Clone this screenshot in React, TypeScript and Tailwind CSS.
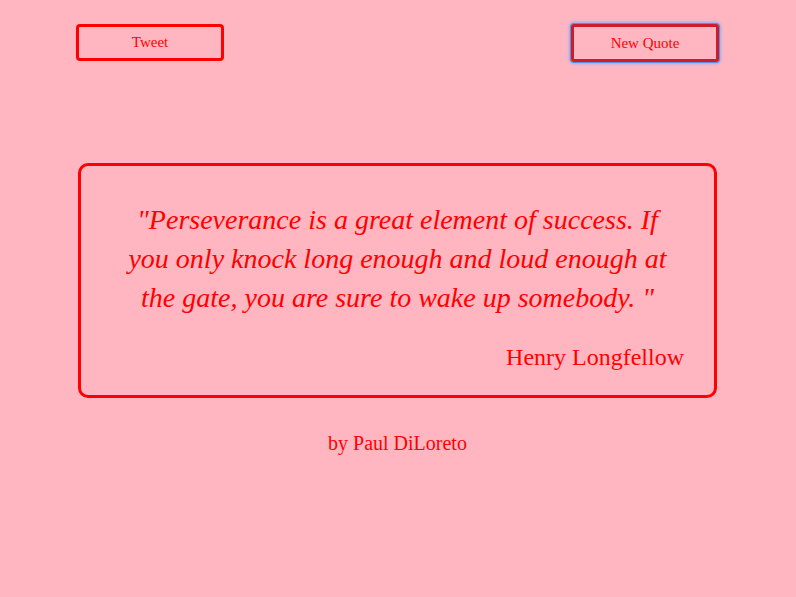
import React from "react";

const serif = { fontFamily: '"Liberation Serif", "DejaVu Serif", serif' };

const App: React.FC = () => {
  return (
    <div className="w-full min-h-[597px] bg-[#ffb6c1] text-[#ff0000]" style={serif}>
      <div className="w-[643px] ml-[76px] pt-6 flex flex-col">
        {/* top buttons */}
        <div className="flex justify-between">
          <button className="w-[148px] h-[37px] border-[3px] border-[#ff0000] rounded-[4px] text-[15px] text-[#ff0000]">
            Tweet
          </button>
          <button className="w-[148px] h-[38px] border-[3px] border-[#d11a2a] rounded-[3px] text-[15px] text-[#ff0000] shadow-[0_0_0_1px_#5b8fe0,0_0_3px_2px_#8fb0f0]">
            New Quote
          </button>
        </div>

        {/* quote box */}
        <div className="ml-[2px] mr-[2px] mt-[101px] h-[235px] border-[3px] border-[#ff0000] rounded-[10px] px-[20px] pt-[34px] flex flex-col">
          <p className="italic text-[28px] leading-[39px] text-center whitespace-nowrap">
            "Perseverance is a great element of success. If
            <br />
            you only knock long enough and loud enough at
            <br />
            the gate, you are sure to wake up somebody. "
          </p>
          <p className="text-right text-[24px] leading-[30px] mt-[25px] pr-[10px]">Henry Longfellow</p>
        </div>

        <p className="text-center text-[20px] mt-[30px]">by Paul DiLoreto</p>
      </div>
    </div>
  );
};

export default App;
